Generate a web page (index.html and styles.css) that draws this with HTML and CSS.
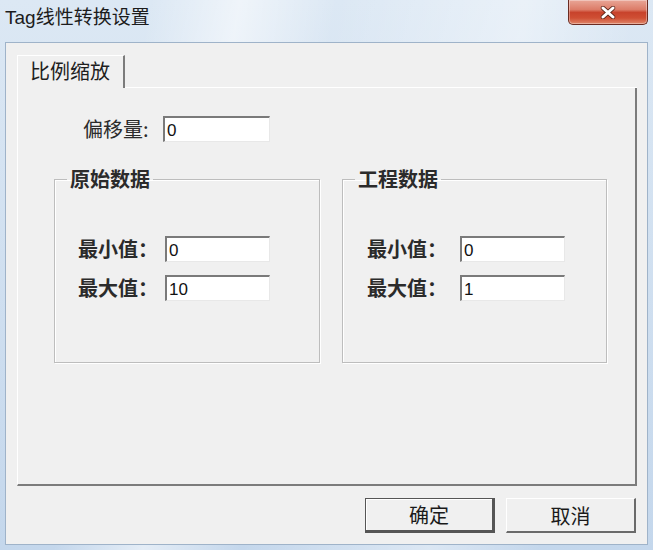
FILE: index.html
```html
<!DOCTYPE html>
<html lang="zh-CN">
<head>
  <meta charset="UTF-8" />
  <meta name="viewport" content="width=device-width, initial-scale=1.0" />
  <title>Tag线性转换设置</title>
  <link rel="stylesheet" href="styles.css">
</head>
<body>
  <div class="window">
    <div class="titlebar">
      <span class="title">Tag线性转换设置</span>
      <button class="close" aria-label="关闭">
        <svg width="16" height="13" viewBox="0 0 16 13">
          <path d="M3 2 L13 11 M13 2 L3 11" stroke="#5a2418" stroke-width="4.4" stroke-linecap="round" />
          <path d="M3 2 L13 11 M13 2 L3 11" stroke="#fff" stroke-width="3" stroke-linecap="round" />
        </svg>
      </button>
    </div>

    <div class="client">
      <div class="tabs">
        <div class="tab">比例缩放</div>
      </div>

      <div class="panel">
        <div class="offset-row">
          <label class="offset-label">偏移量:</label>
          <input class="field" type="text" value="0">
        </div>

        <div class="groups">
          <fieldset class="group">
            <legend>原始数据</legend>
            <div class="rows">
              <label class="label">最小值：</label>
              <input class="field" type="text" value="0">
              <label class="label">最大值：</label>
              <input class="field" type="text" value="10">
            </div>
          </fieldset>

          <fieldset class="group group-eng">
            <legend>工程数据</legend>
            <div class="rows">
              <label class="label">最小值：</label>
              <input class="field" type="text" value="0">
              <label class="label">最大值：</label>
              <input class="field" type="text" value="1">
            </div>
          </fieldset>
        </div>
      </div>

      <div class="actions">
        <button class="btn btn-default">确定</button>
        <button class="btn">取消</button>
      </div>
    </div>
  </div>
</body>
</html>
```

FILE: styles.css
```css
:root {
  --face: #f0f0f0;
  --shadow: #a0a0a0;
  --dark: #696969;
  --text: #2b2b2b;
}

body {
  margin: 0;
  font-family: 'Liberation Sans', 'Noto Sans CJK SC', sans-serif;
  background: #c9daee;
}

.window {
  width: 653px;
  height: 550px;
  display: flex;
  flex-direction: column;
  background:
    linear-gradient(100deg, rgba(255,255,255,0) 20%, rgba(255,255,255,0.55) 32%, rgba(255,255,255,0) 45%, rgba(255,255,255,0.4) 70%, rgba(255,255,255,0) 85%),
    linear-gradient(180deg, #dce8f4 0%, #c4d7ec 100%);
}

.titlebar {
  height: 42px;
  display: flex;
  justify-content: space-between;
  align-items: flex-start;
  padding: 0 5px 0 5px;
  box-sizing: border-box;
}
.title {
  margin-top: 5px;
  font-size: 19px;
  line-height: 26px;
  color: #1c1c1c;
}
.close {
  width: 80px;
  height: 25px;
  padding: 0;
  border: 1px solid #6a2b22;
  border-top: none;
  border-radius: 0 0 5px 5px;
  background: linear-gradient(180deg, #e9a697 0%, #dc7c68 40%, #c8432c 52%, #cf4f34 75%, #e0866a 100%);
  display: flex;
  align-items: center;
  justify-content: center;
  box-shadow: inset 0 0 0 1px rgba(255,255,255,0.35);
}

.client {
  flex: 1;
  margin: 0 5px 5px 5px;
  background: var(--face);
  border: 1px solid #9fb3c9;
  padding: 12px 10px 11px 11px;
  display: flex;
  flex-direction: column;
}

.tabs {
  display: flex;
  height: 33px;
}
.tabs::after {
  content: '';
  flex: 1;
  border-bottom: 1px solid #fff;
}
.tab {
  width: 108px;
  border-top: 1px solid #fff;
  border-left: 1px solid #fff;
  border-right: 2px solid #7c7c7c;
  box-sizing: border-box;
  font-family: 'Noto Sans CJK SC', sans-serif;
  font-size: 20px;
  line-height: 30px;
  padding-left: 12px;
  color: #1e1e1e;
}

.panel {
  height: 396px;
  border-left: 1px solid #fff;
  border-right: 2px solid #7c7c7c;
  border-bottom: 2px solid #7c7c7c;
}

.offset-row {
  display: flex;
  align-items: center;
  gap: 4px;
  margin: 28px 0 0 65px;
}
.offset-label {
  font-family: 'Noto Sans CJK SC', sans-serif;
  font-size: 20px;
  line-height: 26px;
  color: var(--text);
  width: 76px;
}

.field {
  width: 107px;
  height: 26px;
  box-sizing: border-box;
  border-top: 2px solid #7a7a7a;
  border-left: 2px solid #7a7a7a;
  border-right: 1px solid #e8e8e8;
  border-bottom: 1px solid #e8e8e8;
  background: #fff;
  padding: 2px 0 0 2px;
  font-family: 'Liberation Sans', sans-serif;
  font-size: 17px;
  color: #111;
  outline: none;
}

.groups {
  display: flex;
  gap: 22px;
  margin: 25px 0 0 36px;
}
.group {
  width: 266px;
  height: 196px;
  box-sizing: border-box;
  margin: 0;
  padding: 0;
  border: 1px solid #bdbdbd;
  box-shadow: inset 1px 1px 0 #fff, 1px 1px 0 #fff;
}
.group legend {
  margin-left: 12px;
  padding: 0 3px;
  font-family: 'Noto Sans CJK SC', sans-serif;
  font-weight: bold;
  font-size: 20px;
  line-height: 24px;
  color: var(--text);
}
.group-eng {
  width: 265px;
}

.rows {
  display: grid;
  grid-template-columns: 82px 105px;
  column-gap: 5px;
  row-gap: 13px;
  align-items: center;
  padding: 45px 0 0 23px;
}
.group-eng .rows {
  grid-template-columns: 88px 105px;
  padding-left: 24px;
}
.rows .field {
  width: 105px;
}
.label {
  font-family: 'Noto Sans CJK SC', sans-serif;
  font-weight: bold;
  font-size: 20px;
  line-height: 26px;
  color: var(--text);
  white-space: nowrap;
}

.actions {
  display: flex;
  justify-content: flex-end;
  gap: 11px;
  margin-top: 12px;
  padding-right: 1px;
}
.btn {
  width: 130px;
  height: 35px;
  background: var(--face);
  border-top: 1px solid #fff;
  border-left: 1px solid #fff;
  border-right: 2px solid #6a6a6a;
  border-bottom: 2px solid #6a6a6a;
  font-family: 'Noto Sans CJK SC', sans-serif;
  font-size: 20px;
  color: #1a1a1a;
  padding: 0;
}
.btn-default {
  border: 1px solid #555;
  border-right: 3px solid #555;
  border-bottom: 3px solid #555;
  box-shadow: inset 1px 1px 0 #fff;
}
```
